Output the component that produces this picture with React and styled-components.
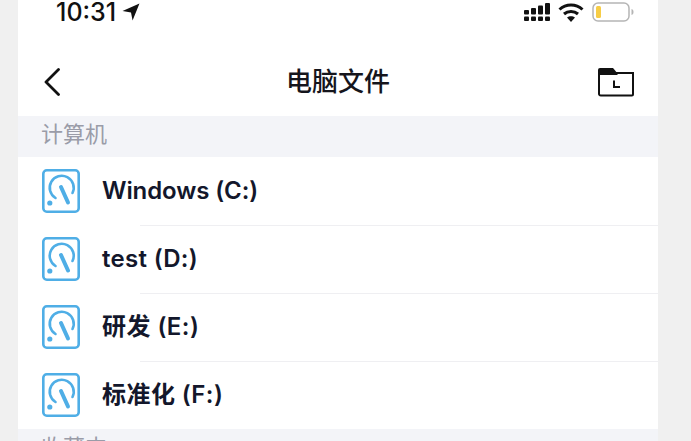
import React from "react";
import styled, { createGlobalStyle } from "styled-components";

const Global = createGlobalStyle`
  html, body { margin: 0; padding: 0; background: #f0f0f0; }
  body { width: 691px; height: 441px; overflow: hidden; }
`;
const Font = `"Inter", "Noto Sans CJK SC", "Liberation Sans", sans-serif`;
const Page = styled.div`
  width: 691px; height: 441px; overflow: hidden; box-sizing: border-box;
  padding: 0 33px 0 18px; font-family: ${Font};
`;
const Phone = styled.div`
  width: 640px; height: 441px; background: #fff; overflow: hidden;
  display: flex; flex-direction: column;
`;
const StatusBar = styled.div`
  height: 24px; display: flex; align-items: center; justify-content: space-between;
  padding: 0 24px 0 38px; flex: none;
`;
const Time = styled.div`
  display: flex; align-items: center; gap: 6px; font-size: 25px; font-weight: 500;
  color: #111; line-height: 24px;
`;
const StatusIcons = styled.div`display: flex; align-items: center; gap: 8px;`;
const NavBar = styled.div`
  height: 92px; flex: none; display: flex; align-items: center; justify-content: space-between;
  padding: 24px 24px 0 26px; box-sizing: border-box; position: relative;
`;
const Title = styled.div`
  position: absolute; left: 0; right: 0; top: 40px; text-align: center; font-size: 26px;
  line-height: 36px; font-weight: 500; color: #15151c;
`;
const Section = styled.div`
  height: ${p => p.$h}px; flex: none; background: #f3f4f8; color: #9a9ca8; font-size: 22px;
  line-height: 36px; padding-left: 23px; box-sizing: border-box;
`;
const Row = styled.div`
  height: 68px; flex: none; display: flex; align-items: center; position: relative; padding-left: 24px;
  & + &::before {
    content: ""; position: absolute; left: 122px; right: 0; top: 0; height: 1px; background: #efeff2;
  }
`;
const Name = styled.div`
  margin-left: 22px; font-size: 24px; font-weight: 600; color: #13172b;
  letter-spacing: ${p => p.$track}px; line-height: 34px;
`;

const Disk = () => (
  <svg width="38" height="44" viewBox="0 0 38 44" fill="none" stroke="#4faee6" strokeLinecap="round">
    <rect x="1.300" y="1.300" width="35.400" height="41.400" rx="3.500" strokeWidth="2.600" />
    <path d="M13.500 29A12 12 0 1 1 30.500 24" strokeWidth="2.600" />
    <path d="M19 18l7 15.500" strokeWidth="4" />
    <circle cx="7.800" cy="34" r="2.600" fill="#4faee6" stroke="none" />
  </svg>
);
const Arrow = () => (
  <svg width="18" height="18" viewBox="0 0 17 17"><path d="M0.500 7.500L16.500 0.500 10 16.500 8.500 9z" fill="#111" /></svg>
);
const Signal = () => (
  <svg width="26" height="20" viewBox="0 0 26 20" fill="#111">
    <rect x="0" y="8" width="5" height="4.500" rx="1" /><rect x="0" y="14.500" width="5" height="4.500" rx="1" />
    <rect x="7" y="6" width="5" height="6.500" rx="1" /><rect x="7" y="14.500" width="5" height="4.500" rx="1" />
    <rect x="14" y="3.500" width="5" height="9" rx="1" /><rect x="14" y="14.500" width="5" height="4.500" rx="1" />
    <rect x="21" y="1" width="5" height="11.500" rx="1" /><rect x="21" y="14.500" width="5" height="4.500" rx="1" />
  </svg>
);
const Wifi = () => (
  <svg width="26" height="20" viewBox="0 0 26 20" fill="none" stroke="#111" strokeWidth="3">
    <path d="M1.500 7.500C8 1.500 18 1.500 24.500 7.500" />
    <path d="M6 12c4-3.500 10-3.500 14 0" />
    <path d="M13 20l-4-4.500c2.300-1.800 5.700-1.800 8 0z" fill="#111" stroke="none" />
  </svg>
);
const Battery = () => (
  <svg width="42" height="20" viewBox="0 0 42 20" fill="none">
    <rect x="1" y="1" width="36" height="18" rx="5" stroke="#b5b5b5" strokeWidth="1.500" />
    <rect x="4" y="4" width="5" height="12" rx="1.500" fill="#f7cd46" />
    <path d="M39.500 7c1.500.4 2 1.500 2 3s-.5 2.600-2 3z" fill="#b5b5b5" />
  </svg>
);
const Back = () => (
  <svg width="16" height="28" viewBox="0 0 16 28" fill="none" stroke="#111" strokeWidth="2.800" strokeLinecap="round" strokeLinejoin="round">
    <path d="M14.500 1.500L2 14l12.500 12.500" />
  </svg>
);
const FolderClock = () => (
  <svg width="36" height="30" viewBox="0 0 36 30" fill="none">
    <path d="M1 26V6h34v21.500a1 1 0 0 1-1 1H3A2 2 0 0 1 1 26z" stroke="#111" strokeWidth="2" />
    <path d="M0 8V3a2 2 0 0 1 2-2h13l5 6 -1 1z" fill="#111" />
    <path d="M16 13.500V20h6" stroke="#111" strokeWidth="2" />
  </svg>
);

const disks = [
  { name: "Windows (C:)", track: -0.1 },
  { name: "test (D:)", track: 0.3 },
  { name: "研发 (E:)", track: 0.45 },
  { name: "标准化 (F:)", track: 0.45 },
];

export default function App() {
  return (
    <Page>
      <Global />
      <Phone>
        <StatusBar>
          <Time>10:31<Arrow /></Time>
          <StatusIcons><Signal /><Wifi /><Battery /></StatusIcons>
        </StatusBar>
        <NavBar>
          <Back />
          <Title>电脑文件</Title>
          <FolderClock />
        </NavBar>
        <Section $h={41}>计算机</Section>
        {disks.map(d => (
          <Row key={d.name}><Disk /><Name $track={d.track}>{d.name}</Name></Row>
        ))}
        <Section $h={60}>收藏夹</Section>
      </Phone>
    </Page>
  );
}
